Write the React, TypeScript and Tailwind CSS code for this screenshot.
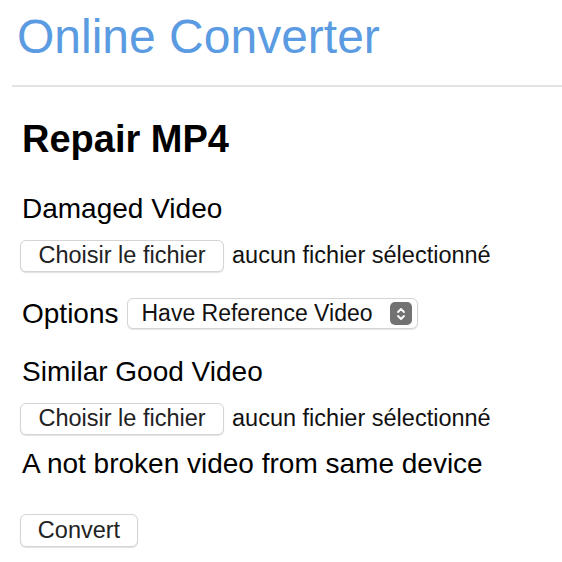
export default function App() {
  const sans = { fontFamily: '"Liberation Sans", Arial, sans-serif' };

  const FileInput = () => (
    <div className="flex items-center h-[32px]">
      <button className="h-[32px] w-[204px] ml-[-2px] rounded-[6px] border border-[#d4d4d4] bg-white text-[23.5px] leading-none text-[#222] shadow-[0_1px_1px_rgba(0,0,0,0.12)]">
        Choisir le fichier
      </button>
      <span className="ml-[8px] text-[23.5px] leading-none text-[#111]">aucun fichier sélectionné</span>
    </div>
  );

  return (
    <div className="min-h-screen bg-white text-black" style={sans}>
      <h1 className="pt-[13px] pl-[17px] text-[48px] leading-[48px] text-[#5b9be2]">Online Converter</h1>
      <div className="mt-[24px] ml-[12px] h-[2px] bg-[#e2e2e2]" />

      <div className="pl-[22px]">
        <h2 className="mt-[33px] text-[38px] leading-[38px] font-bold">Repair MP4</h2>

        <div className="mt-[37px] text-[28px] leading-[28px]">Damaged Video</div>
        <div className="mt-[17px]">
          <FileInput />
        </div>

        <div className="mt-[26px] flex items-center h-[31px]">
          <span className="text-[28px] leading-[28px]">Options</span>
          <div className="ml-[8px] flex items-center h-[31px] w-[291px] rounded-[6px] border border-[#d4d4d4] bg-white shadow-[0_1px_1px_rgba(0,0,0,0.1)] pl-[14px] pr-[5px]">
            <span className="flex-1 text-[23px] leading-none text-[#111]">Have Reference Video</span>
            <span className="flex items-center justify-center w-[22px] h-[23px] rounded-[5px] bg-[#727272]">
              <svg width="10" height="14" viewBox="0 0 10 14" fill="none" stroke="white" strokeWidth="1.8" strokeLinecap="round" strokeLinejoin="round">
                <path d="M2 5 L5 2 L8 5" />
                <path d="M2 9 L5 12 L8 9" />
              </svg>
            </span>
          </div>
        </div>

        <div className="mt-[29px] text-[28px] leading-[28px]">Similar Good Video</div>
        <div className="mt-[17px]">
          <FileInput />
        </div>
        <div className="mt-[15px] text-[28px] leading-[28px]">A not broken video from same device</div>

        <button className="mt-[36px] ml-[-2px] h-[33px] w-[118px] rounded-[6px] border border-[#d4d4d4] bg-white text-[23.5px] leading-none text-[#222] shadow-[0_1px_1px_rgba(0,0,0,0.12)]">
          Convert
        </button>
      </div>
    </div>
  );
}
